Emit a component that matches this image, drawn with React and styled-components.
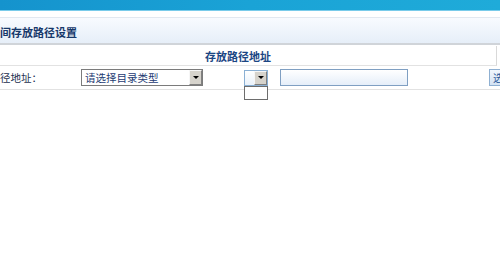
import React from "react";
import styled, { createGlobalStyle } from "styled-components";

const GlobalStyle = createGlobalStyle`
  html, body { margin: 0; padding: 0; background: #ffffff; overflow: hidden; }
  body { font-family: "Noto Sans CJK SC", "Noto Sans", sans-serif; font-size: 10.5px; }
`;

const Page = styled.div`
  width: 500px;
  height: 263px;
  display: flex;
  flex-direction: column;
  background: #ffffff;
  overflow: hidden;
`;

const Banner = styled.div`
  height: 10px;
  flex-shrink: 0;
  background: linear-gradient(90deg, #1593cd, #1aa3d6 50%, #1fabd9);
  border-bottom: 1px solid #79cbea;
`;

const Gap = styled.div`
  height: 6px;
  flex-shrink: 0;
`;

const TitleBar = styled.div`
  height: 23px;
  flex-shrink: 0;
  border-top: 1px solid #e2e8f0;
  border-bottom: 2px solid #d0d4d9;
  background: linear-gradient(#f8fbff, #e6eef8);
  display: flex;
  align-items: center;
  padding-top: 2px;
  box-sizing: content-box;
  font-weight: bold;
  font-size: 11px;
  color: #17386a;
  white-space: nowrap;
`;

const HeaderWrap = styled.div`
  display: flex;
  flex-shrink: 0;
  margin-top: 1px;
`;

const HeaderRow = styled.div`
  width: 497px;
  height: 20px;
  flex-shrink: 0;
  border-right: 1px solid #d9d9d9;
  border-bottom: 1px solid #e2e2e2;
  display: flex;
  align-items: center;
  justify-content: center;
  padding-right: 20px;
  box-sizing: border-box;
  font-weight: bold;
  font-size: 11px;
  color: #1b4683;
`;

const DataRow = styled.div`
  height: 23px;
  flex-shrink: 0;
  border-bottom: 1px solid #e2e2e2;
  display: flex;
  align-items: center;
  color: #1b2f4f;
  & > * { flex-shrink: 0; }
`;

const Label = styled.div`
  width: 81px;
  white-space: nowrap;
`;

const Select = styled.div`
  position: relative;
  width: ${(p) => p.$w}px;
  height: ${(p) => p.$h}px;
  margin-left: ${(p) => p.$ml || 0}px;
  box-sizing: border-box;
  border: 1px solid ${(p) => (p.$light ? "#8ab0d4" : "#7b7b7b")};
  background: ${(p) => (p.$light ? "linear-gradient(#ffffff, #eaf2fb)" : "#ffffff")};
  display: flex;
  align-items: stretch;
`;

const SelectText = styled.div`
  flex: 1;
  padding-left: 3px;
  line-height: 15px;
  color: #1d3b73;
  white-space: nowrap;
  overflow: hidden;
`;

const Arrow = styled.div`
  width: 13px;
  background: #d6d3cc;
  border-left: 1px solid #f6f6f6;
  border-top: 1px solid #f6f6f6;
  border-right: 1px solid #808080;
  border-bottom: 1px solid #808080;
  box-sizing: border-box;
  display: flex;
  align-items: center;
  justify-content: center;
  &::after {
    content: "";
    border-left: 3px solid transparent;
    border-right: 3px solid transparent;
    border-top: 3px solid #000;
  }
`;

const DropList = styled.div`
  position: absolute;
  left: -1px;
  top: 15px;
  width: 24px;
  height: 14px;
  box-sizing: border-box;
  border: 1px solid #6d6d6d;
  background: #ffffff;
`;

const Input = styled.div`
  width: 128px;
  height: 17px;
  margin-left: 12px;
  box-sizing: border-box;
  border: 1px solid #7f9fc2;
  background: linear-gradient(#ffffff, #e5eef9);
`;

const Button = styled.div`
  width: 30px;
  height: 17px;
  margin-left: 81px;
  box-sizing: border-box;
  border: 1px solid #8fb0d2;
  background: linear-gradient(#f2f7fd, #d4e3f4);
  color: #2a5a9a;
  line-height: 15px;
  padding-left: 3px;
  white-space: nowrap;
  overflow: hidden;
`;

export default function App() {
  return (
    <>
      <GlobalStyle />
      <Page>
        <Banner />
        <Gap />
        <TitleBar>间存放路径设置</TitleBar>
        <HeaderWrap>
          <HeaderRow>存放路径地址</HeaderRow>
        </HeaderWrap>
        <DataRow>
          <Label>径地址：</Label>
          <Select $w={122} $h={17}>
            <SelectText>请选择目录类型</SelectText>
            <Arrow />
          </Select>
          <Select $w={24} $h={16} $ml={41} $light>
            <SelectText />
            <Arrow />
            <DropList />
          </Select>
          <Input />
          <Button>选</Button>
        </DataRow>
      </Page>
    </>
  );
}
